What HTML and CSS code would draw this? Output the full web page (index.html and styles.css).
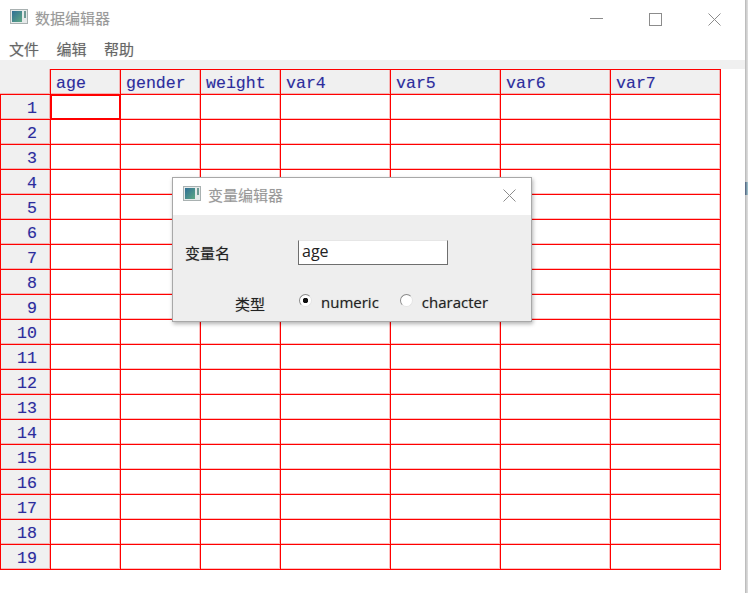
FILE: index.html
```html
<!DOCTYPE html>
<html lang="zh-CN">
<head>
    <meta charset="UTF-8">
    <title>数据编辑器</title>
    <link rel="stylesheet" href="styles.css">
</head>
<body>

<div class="window">
    <div class="titlebar">
        <svg class="app-icon" viewBox="0 0 18 15">
            <defs>
                <linearGradient id="panel" x1="0" y1="0" x2="1" y2="1">
                    <stop offset="0" stop-color="#2f6f96"/>
                    <stop offset="1" stop-color="#5fa884"/>
                </linearGradient>
            </defs>
            <rect x="0.5" y="0.5" width="17" height="14" fill="#e6eaea" stroke="#a9b1b1"/>
            <rect x="2" y="2" width="10" height="11" fill="url(#panel)"/>
            <rect x="14" y="2" width="2" height="7" fill="#6f9a94"/>
        </svg>
        <span class="title">数据编辑器</span>
        <div class="win-buttons">
            <svg class="win-btn" viewBox="0 0 13 13"><path d="M0 5.5H13" stroke="#8c8c8c" fill="none"/></svg>
            <svg class="win-btn" viewBox="0 0 13 13"><rect x="0.5" y="0.5" width="12" height="12" stroke="#8c8c8c" fill="none"/></svg>
            <svg class="win-btn" viewBox="0 0 13 13"><path d="M0.5 0.5L12.5 12.5M12.5 0.5L0.5 12.5" stroke="#8c8c8c" fill="none"/></svg>
        </div>
    </div>
    <div class="menubar">
        <span>文件</span>
        <span>编辑</span>
        <span>帮助</span>
    </div>
    <div class="menu-strip"></div>
    <div class="sheet" id="sheet"></div>

    <div class="dialog">
        <div class="dialog-title">
            <svg class="app-icon" viewBox="0 0 18 15">
                <rect x="0.5" y="0.5" width="17" height="14" fill="#e6eaea" stroke="#a9b1b1"/>
                <rect x="2" y="2" width="10" height="11" fill="url(#panel)"/>
                <rect x="14" y="2" width="2" height="7" fill="#6f9a94"/>
            </svg>
            <span class="title">变量编辑器</span>
            <svg class="dialog-close" viewBox="0 0 13 13"><path d="M0.5 0.5L12.5 12.5M12.5 0.5L0.5 12.5" stroke="#8c8c8c" fill="none"/></svg>
        </div>
        <div class="dialog-body">
            <div class="name-row">
                <label class="name-label">变量名</label>
                <input class="name-input" type="text" value="age">
            </div>
            <div class="type-row">
                <span class="type-label">类型</span>
                <span class="radio checked"></span>
                <span class="radio-text numeric">numeric</span>
                <span class="radio"></span>
                <span class="radio-text">character</span>
            </div>
        </div>
    </div>
</div>
<div class="desktop-edge"><div class="edge-notch"></div></div>

<script>
    const headers = ['age', 'gender', 'weight', 'var4', 'var5', 'var6', 'var7'];
    const sheet = document.getElementById('sheet');

    function addCell(className, text) {
        const cell = document.createElement('div');
        cell.className = className;
        cell.textContent = text || '';
        sheet.appendChild(cell);
    }

    addCell('corner');
    headers.forEach(name => addCell('col-head', name));
    for (let row = 1; row <= 19; row++) {
        addCell('row-head', row);
        headers.forEach((name, i) => {
            addCell(row === 1 && i === 0 ? 'cell active' : 'cell');
        });
    }
</script>

</body>
</html>
```

FILE: styles.css
```css
body {
    display: flex;
    margin: 0;
    height: 593px;
    background: #fff;
    overflow: hidden;
    font-family: "Noto Sans CJK SC", "Liberation Sans", sans-serif;
}
.window {
    position: relative;
    width: 745px;
    height: 593px;
    background: #fff;
}
.desktop-edge {
    width: 3px;
    height: 593px;
    background: linear-gradient(to right, #b4b4b4, #cfcfcf, #e0e0e0);
}
.edge-notch {
    width: 3px;
    height: 13px;
    margin-top: 182px;
    background: linear-gradient(to right, #4a5a78, #a9cfd6);
}
.titlebar {
    display: flex;
    align-items: flex-start;
    height: 29px;
    padding: 8px 0 0 10px;
}
.app-icon {
    width: 18px;
    height: 15px;
    margin: 1px 7px 0 0;
}
.title {
    font-size: 15px;
    line-height: 20px;
    color: #999;
    text-shadow: 0 0 1px rgba(153, 153, 153, 0.35);
}
.win-buttons {
    display: flex;
    margin: 5px 24px 0 auto;
    gap: 46px;
}
.win-btn {
    width: 13px;
    height: 13px;
}
.menubar {
    display: flex;
    gap: 17.5px;
    height: 23px;
    align-items: center;
    padding-left: 9px;
    font-size: 15px;
    color: #666;
    text-shadow: 0 0 1px rgba(102, 102, 102, 0.4);
}
.menu-strip {
    height: 9px;
    background: #f0f0f0;
}
.sheet {
    display: grid;
    grid-template-columns: 51px 70px 80px 80px 110px 110px 110px 110px;
    grid-template-rows: 26px;
    grid-auto-rows: 25px;
    width: 721px;
    font-family: "Liberation Mono", monospace;
    font-size: 16.6px;
    color: #2c2c9c;
    text-shadow: 0 0 1px rgba(60, 60, 190, 0.25);
}
.sheet > div {
    box-sizing: border-box;
    border-right: 1px solid #f00;
    border-bottom: 1px solid #f00;
    box-shadow: inset -1px -1px 0 rgba(255, 0, 0, 0.25);
}
.corner {
    background: #f0f0f0;
}
.col-head {
    background: #f0f0f0;
    border-top: 1px solid #f00;
    padding: 4px 0 0 5px;
}
.row-head {
    background: #f0f0f0;
    border-left: 1px solid #f00;
    text-align: right;
    padding: 4px 13px 0 0;
}
.sheet > .cell.active {
    border: 2px solid #f00;
    margin: -1px 0 0 -1px;
    box-shadow: none;
}
.dialog {
    position: absolute;
    left: 172px;
    top: 177px;
    width: 360px;
    height: 145px;
    box-sizing: border-box;
    border: 1px solid #a8a8a8;
    background: #eee;
    box-shadow: 1px 2px 4px rgba(0, 0, 0, 0.3);
}
.dialog-title {
    display: flex;
    align-items: flex-start;
    height: 30px;
    padding: 7px 0 0 10px;
    background: #fff;
}
.dialog-close {
    width: 13px;
    height: 13px;
    margin: 4px 15px 0 auto;
}
.dialog-body {
    font-size: 15px;
    color: #222;
    text-shadow: 0 0 1px rgba(34, 34, 34, 0.4);
}
.name-row {
    display: flex;
    align-items: center;
    padding: 25px 0 0 12px;
}
.name-label {
    width: 113px;
    margin-top: -1px;
}
.name-input {
    box-sizing: border-box;
    width: 150px;
    height: 25px;
    padding: 0 3px 3px;
    border: 1px solid #6e6e6e;
    border-top-color: #e6e6e6;
    border-radius: 0;
    background: #fff;
    font-family: "Open Sans", sans-serif;
    font-size: 16px;
    color: #222;
}
.type-row {
    display: flex;
    align-items: center;
    padding: 26px 0 0 62px;
}
.type-label {
    width: 64px;
    margin-top: 2px;
}
.radio {
    box-sizing: border-box;
    width: 13px;
    height: 13px;
    border-radius: 50%;
    background: #fff;
    border: 1.5px solid #8a8a8a;
    border-right-color: #e4e4e4;
    border-bottom-color: #e4e4e4;
    margin-top: -5px;
}
.radio.checked {
    background: radial-gradient(circle, #111 0 2.5px, #fff 3px);
}
.radio-text {
    margin-left: 9px;
    font-family: "Open Sans", sans-serif;
    font-size: 15px;
    margin-top: -2px;
}
.radio-text.numeric {
    margin-right: 21px;
}
```
